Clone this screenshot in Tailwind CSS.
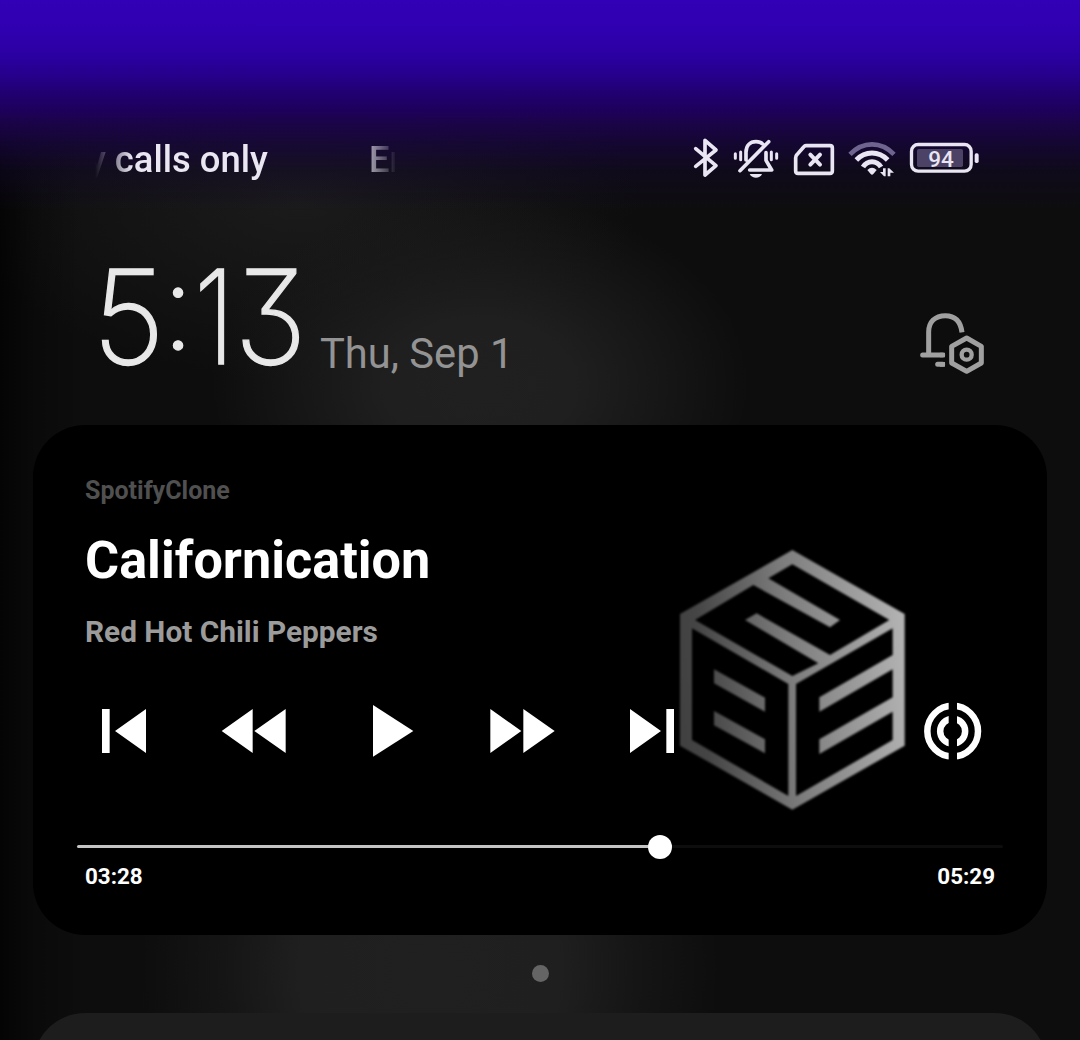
<!DOCTYPE html>
<html lang="en">
<head>
<meta charset="utf-8">
<title>Notification shade</title>
<script src="https://cdn.jsdelivr.net/npm/@tailwindcss/browser@4"></script>
</head>
<body class="w-[1080px] h-[1040px] overflow-hidden bg-[#0d0d0d] font-['Roboto',sans-serif]">
<div class="h-full bg-[linear-gradient(90deg,rgba(0,0,0,.7)_0,rgba(0,0,0,.25)_35px,transparent_80px),radial-gradient(ellipse_270px_190px_at_480px_385px,#202020_0,#1f1f1f_35%,rgba(28,28,28,.65)_65%,transparent_100%),radial-gradient(ellipse_290px_300px_at_430px_970px,#202020_0,#1f1f1f_45%,rgba(26,26,26,.6)_72%,transparent_100%),radial-gradient(ellipse_340px_180px_at_300px_200px,#1b1b1b_0,transparent_100%)]">
<div class="h-full overflow-hidden flex flex-col bg-[linear-gradient(180deg,#3200b6_0,#2f00b0_30px,#2b00a2_55px,#26008c_75px,#210072_92px,#1e005e_108px,rgba(28,3,76,.95)_122px,rgba(22,5,60,.75)_145px,rgba(18,7,44,.45)_170px,transparent_212px)]">

  <!-- Status bar -->
  <div class="h-[180px] pt-[135px] pl-[92px] pr-[99px] flex justify-between shrink-0">
    <div class="w-[303px] h-[45px] overflow-hidden flex text-[36.4px] leading-[50px] font-medium text-[#eae6f2] whitespace-nowrap [mask-image:linear-gradient(90deg,transparent_3px,#000_40px,#000_265px,transparent_305px)]">
      <span class="-ml-[4px] w-[281px] shrink-0">y calls only</span><span>Emergency calls only</span>
    </div>
    <div class="flex text-[#e9e5f3]">
      <svg class="w-7 h-[45px]" viewBox="36 30 84 135" fill="none" stroke="currentColor" stroke-width="11" stroke-linejoin="round" stroke-linecap="round"><path d="M47 71 108 122 75 150V46L108 75 47 124"/></svg>
      <svg class="w-12 h-[45px] ml-3" viewBox="156 30 144 135" fill="none" stroke="currentColor" stroke-width="11" stroke-linejoin="round" stroke-linecap="round"><path d="M198 105V82C198 62 210 50 228 50 237 50 244 53 248 57M180 137 266 50M258 83V106L275 135H209"/><path stroke-width="9" d="M166 86V100M182 81V104M274 81V104M290 86V100"/><path fill="currentColor" stroke="none" d="M209 147H246C240 162 216 162 209 147Z"/></svg>
      <svg class="w-11 h-[45px] ml-3" viewBox="336 30 132 135" fill="none" stroke="currentColor" stroke-width="11" stroke-linejoin="round" stroke-linecap="round"><path d="M378 62H450Q457 62 457 69V138Q457 145 450 145H354Q347 145 347 138V98Q347 93 351 89L371 66Q374 62 378 62Z"/><path stroke-width="12" d="M391 89 420 119M420 89 391 119"/></svg>
      <svg class="w-[50px] h-[45px] ml-[11px]" viewBox="36 30 150 135" fill="none" stroke="currentColor"><path stroke="#6f6490" stroke-width="14" d="M45 88Q74 58 111 58T177 88"/><path stroke-width="15" d="M64 105Q84 84 111 84T158 105"/><path stroke-width="15" d="M84 126Q94 110 111 110T138 126"/><path fill="currentColor" stroke="none" d="M97 135Q111 122 125 135L115 147Q111 151 107 147Z"/><path fill="currentColor" stroke="none" d="M144 130H152V154H147L135 141H144ZM158 154V130H163L177 143H166V154Z"/></svg>
      <div class="relative w-[72px] ml-3">
        <svg class="w-[72px] h-[45px]" viewBox="222 30 216 135"><rect x="229.500" y="58.500" width="179" height="80" rx="20" fill="none" stroke="currentColor" stroke-width="10"/><rect x="246" y="72" width="138" height="54" rx="5" fill="#4b4265"/><rect x="419" y="85" width="12" height="29" rx="5" fill="currentColor"/></svg>
        <span class="absolute left-0 top-0 w-[64px] text-center text-[22.5px] leading-[49px] font-medium">94</span>
      </div>
    </div>
  </div>

  <!-- Clock and date -->
  <div class="h-[245px] pl-[94px] pr-[70px] flex shrink-0">
    <div class="w-[226px] pt-[57px] flex text-[131px] leading-[160px] font-['Inter'] font-extralight text-[#e8e8e8] [-webkit-text-stroke:1.3px_#e8e8e8] [font-feature-settings:'cv09']">
      <span class="w-[69px] flex justify-center scale-x-[.96]">5</span>
      <span class="w-[30px] flex justify-center text-[118px] leading-[138px]">:</span>
      <span class="w-[43px] flex justify-center scale-x-[.82]">1</span>
      <span class="w-[69px] flex justify-center scale-x-[.93]">3</span>
    </div>
    <div class="pt-[149px] text-[41.7px] leading-[50px] text-[#939393]">Thu, Sep 1</div>
    <svg class="w-[110px] h-[90px] mt-[120px] ml-auto" viewBox="0 0 330 270" fill="none" stroke="#a0a0a0" stroke-width="15" stroke-linejoin="round"><path d="M86 160V96C86 66 105 47 136 47 164 47 182 64 186 97"/><path stroke-linecap="round" d="M68 165H128M113 193H128"/><path stroke="none" fill="#a0a0a0" d="M120 158H135V172H120ZM120 186H135V200H120Z"/><path d="M200 114 244 139V189L200 214 155 189V139Z"/><circle cx="200" cy="164" r="15" stroke-width="13"/></svg>
  </div>

  <!-- Media player -->
  <div class="relative mx-[33px] h-[510px] rounded-[52px] bg-black text-white font-bold shrink-0">
    <svg class="absolute left-[627px] top-[105px] w-[260px] h-[300px] blur-[.8px]" viewBox="0 0 780 900">
      <defs><linearGradient id="metal" x1="0" x2="1" y1=".55" y2=".45"><stop offset="0" stop-color="#414141"/><stop offset=".1" stop-color="#454545"/><stop offset=".5" stop-color="#7d7d7d"/><stop offset="1" stop-color="#b2b2b2"/></linearGradient></defs>
      <path fill="url(#metal)" fill-rule="evenodd" d="M397 60 734 252V647L397 839 60 647V252ZM397 103 325 145 540 270 510 292 280 165 105 270 397 438 475 400 255 270 290 250 510 375 688 270ZM96 295V630L385 798V462ZM408 462V798L698 630V545L478 672V628L698 502V418L478 545V502L698 375V295ZM162 418 315 503V545L162 460ZM162 543 315 628V670L162 586Z"/>
    </svg>
    <div class="pl-[52px] pt-[50px]">
      <div class="text-[25px] leading-8 text-[#505050]">SpotifyClone</div>
      <div class="mt-[22px] text-[52.2px] leading-[64px]">Californication</div>
      <div class="mt-[19px] text-[29.8px] leading-10 text-[#9b9b9b]">Red Hot Chili Peppers</div>
    </div>
    <div class="mt-[38px] pl-[67px] h-20 flex items-start">
      <svg class="w-12 h-20" viewBox="60 0 144 240" fill="#fff"><path d="M66 57H89V189H66ZM105 123 198 57V189Z"/></svg>
      <svg class="w-17 h-20 ml-[72px]" viewBox="420 0 204 240" fill="#fff"><path d="M425 123 518 57V189ZM523 123 617 57V189Z"/></svg>
      <svg class="w-[45px] h-20 ml-[82px]" viewBox="870 0 135 240" fill="#fff"><path d="M879 45 1000 123 879 200Z"/></svg>
      <svg class="w-[67px] h-20 ml-[74px]" viewBox="57 0 201 240" fill="#fff"><path d="M61 57 154 123 61 189ZM160 57 254 123 160 189Z"/></svg>
      <svg class="w-12 h-20 ml-[72px]" viewBox="474 0 144 240" fill="#fff"><path d="M480 57 573 123 480 189ZM589 57H612V189H589Z"/></svg>
      <svg class="w-[61px] h-20 ml-[246px]" viewBox="66 0 183 240">
        <defs><mask id="slot" maskUnits="userSpaceOnUse" x="66" y="0" width="183" height="240"><path fill="#fff" d="M66 0H146V240H66ZM171 0H249V240H171Z"/></mask></defs>
        <g mask="url(#slot)" fill="none" stroke="#fff" stroke-width="19.500"><circle cx="158" cy="123.500" r="76"/><circle cx="158" cy="123.500" r="37.500"/></g>
      </svg>
    </div>
    <div class="mt-[65px] ml-[44px] w-[926px] h-6 flex items-center">
      <div class="w-[571px] h-[3px] mb-0.5 rounded-l-full bg-[#c4c4c4]"></div>
      <div class="size-6 rounded-full bg-white"></div>
      <div class="flex-1 h-[3px] mb-0.5 rounded-r-full bg-[#0d0d0d]"></div>
    </div>
    <div class="mt-[2px] px-[52px] flex justify-between text-[22.4px] leading-[30px]"><span>03:28</span><span>05:29</span></div>
  </div>

  <div class="size-[17px] mt-[30px] mx-auto rounded-full bg-[#656565] shrink-0"></div>
  <div class="mt-[31px] mx-[33px] h-[27px] overflow-hidden shrink-0"><div class="h-40 rounded-[52px] bg-[#1d1d1d]"></div></div>
</div>
</div>
</body>
</html>
